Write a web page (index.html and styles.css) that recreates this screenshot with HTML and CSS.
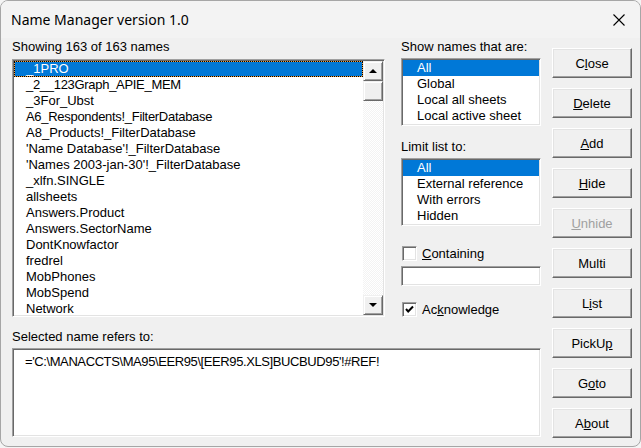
FILE: index.html
```html
<!DOCTYPE html>
<html lang="en">
  <head>
    <meta charset="UTF-8" />
    <title>Name Manager version 1.0</title>
    <link rel="stylesheet" href="styles.css">
  </head>
  <body>
    <div class="window">
      <div class="titlebar">
        <span class="title">Name Manager version 1.0</span>
        <svg class="close-x" width="12" height="12" viewBox="0 0 12 12">
          <path d="M0.5 0.5 L11.5 11.5 M11.5 0.5 L0.5 11.5" stroke="#000" stroke-width="1.1" fill="none" />
        </svg>
      </div>

      <div class="dialog">
        <div class="names">
          <div class="label">Showing 163 of 163 names</div>
          <div class="listbox big">
            <div class="items">
              <div class="item selected focus">_1PRO</div>
              <div class="item caps">_2__123Graph_APIE_MEM</div>
              <div class="item">_3For_Ubst</div>
              <div class="item caps">A6_Respondents!_FilterDatabase</div>
              <div class="item">A8_Products!_FilterDatabase</div>
              <div class="item">'Name Database'!_FilterDatabase</div>
              <div class="item">'Names 2003-jan-30'!_FilterDatabase</div>
              <div class="item">_xlfn.SINGLE</div>
              <div class="item">allsheets</div>
              <div class="item">Answers.Product</div>
              <div class="item">Answers.SectorName</div>
              <div class="item">DontKnowfactor</div>
              <div class="item">fredrel</div>
              <div class="item">MobPhones</div>
              <div class="item">MobSpend</div>
              <div class="item">Network</div>
            </div>
            <div class="scrollbar">
              <div class="sb-btn"><span class="arrow up"></span></div>
              <div class="sb-thumb"></div>
              <div class="sb-track"></div>
              <div class="sb-btn"><span class="arrow down"></span></div>
            </div>
          </div>
        </div>

        <div class="filters">
          <div class="label">Show names that are:</div>
          <div class="listbox small">
            <div class="item selected">All</div>
            <div class="item">Global</div>
            <div class="item">Local all sheets</div>
            <div class="item">Local active sheet</div>
          </div>
          <div class="label spaced">Limit list to:</div>
          <div class="listbox small">
            <div class="item selected">All</div>
            <div class="item">External reference</div>
            <div class="item">With errors</div>
            <div class="item">Hidden</div>
          </div>
          <div class="check-row first">
            <span class="checkbox"></span>
            <span><u>C</u>ontaining</span>
          </div>
          <div class="textbox short"></div>
          <div class="check-row second">
            <span class="checkbox">
              <svg width="11" height="11" viewBox="0 0 11 11">
                <path d="M2 5 L4.2 7.5 L9 2.5" stroke="#000" stroke-width="2" fill="none" />
              </svg>
            </span>
            <span>Ac<u>k</u>nowledge</span>
          </div>
        </div>

        <div class="refers">
          <div class="label">Selected name refers to:</div>
          <div class="textbox long">='C:\MANACCTS\MA95\EER95\[EER95.XLS]BUCBUD95'!#REF!</div>
        </div>

        <div class="buttons">
          <button>C<u>l</u>ose</button>
          <button><u>D</u>elete</button>
          <button><u>A</u>dd</button>
          <button><u>H</u>ide</button>
          <button class="disabled"><u>U</u>nhide</button>
          <button>Multi</button>
          <button>L<u>i</u>st</button>
          <button>PickU<u>p</u></button>
          <button>G<u>o</u>to</button>
          <button>A<u>b</u>out</button>
        </div>
      </div>
    </div>
  </body>
</html>
```

FILE: styles.css
```css
body {
  margin: 0;
  background: #f4f4f4;
  font-family: "Liberation Sans", Arial, sans-serif;
  font-size: 13px;
  color: #000;
}
.window {
  width: 641px;
  height: 447px;
  box-sizing: border-box;
  border: 1px solid #a6a6a6;
  border-radius: 8px;
  background: #f0f0f0;
  overflow: hidden;
}
.titlebar {
  height: 37px;
  display: flex;
  align-items: center;
  justify-content: space-between;
  padding: 0 15px 0 10px;
  background: #f3f3f3;
}
.title {
  font-family: "Noto Sans", "Liberation Sans", sans-serif;
  font-size: 14px;
}
.dialog {
  display: grid;
  grid-template-columns: 373px 140px 80px;
  grid-template-rows: 279px 110px;
  grid-template-areas:
    "names filters buttons"
    "refers refers buttons";
  column-gap: 16px;
  row-gap: 11px;
  padding-left: 11px;
}
.dialog .buttons {
  margin-left: -5px;
}
.names {
  grid-area: names;
}
.filters {
  grid-area: filters;
  display: flex;
  flex-direction: column;
}
.refers {
  grid-area: refers;
}
.buttons {
  grid-area: buttons;
  display: flex;
  flex-direction: column;
  gap: 10px;
  padding-top: 10px;
}
.label {
  height: 16px;
  line-height: 16px;
  margin-top: 1px;
  margin-bottom: -1px;
  white-space: nowrap;
}
.label.spaced {
  margin-top: 13px;
}

/* sunken 3d boxes */
.listbox,
.textbox {
  background: #fff;
  box-sizing: border-box;
  border: 1px solid;
  border-color: #a0a0a0 #fff #fff #a0a0a0;
  box-shadow: inset 1px 1px #696969, inset -1px -1px #e3e3e3;
  padding: 1px;
}
.listbox.big {
  margin-top: 5px;
  height: 258px;
  display: flex;
}
.listbox.small {
  margin-top: 4px;
  height: 68px;
}
.items {
  flex: 1;
  overflow: hidden;
}
.item {
  height: 16px;
  line-height: 16px;
  padding-left: 12px;
  white-space: nowrap;
}
.item.caps {
  letter-spacing: -0.3px;
}
.listbox.small .item {
  padding-left: 14px;
}
.item.selected {
  background: #0078d7;
  color: #fff;
}
.item.focus {
  box-shadow: inset 0 0 0 1px #f0a040;
  outline: 1px dotted #000;
  outline-offset: -1px;
}

.scrollbar {
  width: 20px;
  display: flex;
  flex-direction: column;
}
.sb-btn,
.sb-thumb {
  height: 20px;
  box-sizing: border-box;
  background: #f0f0f0;
  border: 1px solid;
  border-color: #f0f0f0 #696969 #696969 #f0f0f0;
  box-shadow: inset 1px 1px #fff, inset -1px -1px #a0a0a0;
  display: flex;
  align-items: center;
  justify-content: center;
}
.sb-track {
  flex: 1;
  background: repeating-conic-gradient(#f3f3f3 0 25%, #fff 0 50%) 0 0 / 2px 2px;
}
.arrow {
  width: 0;
  height: 0;
  border-left: 4px solid transparent;
  border-right: 4px solid transparent;
}
.arrow.up {
  border-bottom: 4px solid #000;
}
.arrow.down {
  border-top: 4px solid #000;
}

.check-row {
  height: 16px;
  display: flex;
  align-items: center;
  gap: 5px;
  padding-left: 1px;
  white-space: nowrap;
}
.check-row.first {
  margin-top: 20px;
}
.check-row.second {
  margin-top: 16px;
}
.checkbox {
  width: 15px;
  height: 15px;
  box-sizing: border-box;
  background: #fff;
  border: 1px solid;
  border-color: #a0a0a0 #fff #fff #a0a0a0;
  box-shadow: inset 1px 1px #696969, inset -1px -1px #e3e3e3;
  display: flex;
  align-items: center;
  justify-content: center;
}
.textbox.short {
  margin-top: 5px;
  height: 29px;
}
.textbox.long {
  margin-top: 4px;
  height: 89px;
  width: 529px;
  padding: 5px 12px;
  line-height: 16px;
  letter-spacing: -0.4px;
  white-space: nowrap;
}

button {
  height: 30px;
  width: 80px;
  padding: 0;
  font-family: inherit;
  font-size: 13px;
  color: #000;
  background: #f0f0f0;
  border: 1px solid;
  border-color: #fff #696969 #696969 #fff;
  box-shadow: inset -1px -1px #a0a0a0, inset 1px 1px #e3e3e3;
}
button.disabled {
  color: #a0a0a0;
}
```
